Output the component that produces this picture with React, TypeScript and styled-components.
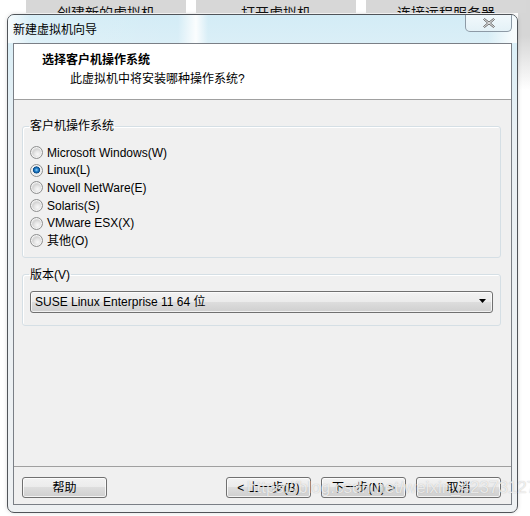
import React from "react";
import styled, { createGlobalStyle } from "styled-components";

const Global = createGlobalStyle`
  html, body { margin: 0; padding: 0; background: #fff; }
  body {
    font-family: "Liberation Sans", "Noto Sans CJK SC", sans-serif;
    font-size: 12px;
    color: #000;
  }
`;

const Page = styled.div`
  position: relative;
  width: 530px;
  height: 516px;
  overflow: hidden;
  background:
    linear-gradient(to bottom, #d6d6d6 0, #d6d6d6 36px, rgba(255,255,255,0) 90px) right top / 12px 100% no-repeat,
    #fff;
`;

const TabStrip = styled.div`
  display: flex;
  height: 14px;
  padding-left: 26px;
  gap: 10px;
`;

const Tab = styled.div<{ $w: number }>`
  width: ${(p) => p.$w}px;
  height: 13px;
  background: #d7d7d7;
  overflow: hidden;
  display: flex;
  justify-content: center;
  align-items: flex-end;
  font-size: 14px;
  line-height: 14px;
  color: #111;
  span { margin-bottom: -7px; }
`;

const Window = styled.div`
  margin-left: 7px;
  width: 511px;
  height: 499px;
  box-sizing: border-box;
  border: 1px solid #505459;
  border-radius: 7px;
  background: linear-gradient(to bottom, #d3ecf6 0, #dbeff7 30px, #e9eff3 120px, #eef1f3 100%);
  display: flex;
  flex-direction: column;
  overflow: hidden;
  box-shadow: 0 0 4px rgba(0,0,0,0.15);
`;

const TitleBar = styled.div`
  display: flex;
  height: 28px;
  padding-left: 5px;
  padding-right: 5px;
  background:
    linear-gradient(to right,
      rgba(255,255,255,0.85) 0px, rgba(255,255,255,0.1) 22px,
      rgba(255,255,255,0) 170px, rgba(255,255,255,0.9) 188px, rgba(255,255,255,0) 200px,
      rgba(255,255,255,0) 480px, rgba(255,255,255,0.8) 505px);
`;

const TitleText = styled.div`
  flex: 1;
  align-self: center;
  line-height: 14px;
  margin-top: 2px;
`;

const CloseButton = styled.div`
  width: 47px;
  height: 18px;
  margin-top: -1px;
  box-sizing: border-box;
  border: 1px solid #8d9aa6;
  border-top: none;
  border-radius: 0 0 5px 5px;
  background: linear-gradient(to bottom, #f2f9fc, #e4f1f7);
  display: flex;
  justify-content: center;
  align-items: center;
`;

const Client = styled.div`
  margin: 0 5px 0 5px;
  height: 462px;
  box-sizing: border-box;
  border: 1px solid #7a7f86;
  background: #f0f0f0;
  display: flex;
  flex-direction: column;
`;

const Header = styled.div`
  height: 56px;
  box-sizing: border-box;
  background: #fff;
  border-bottom: 1px solid #a0a0a0;
  padding: 8px 0 0 28px;
`;

const HeaderTitle = styled.div`
  font-weight: bold;
  font-size: 12px;
  line-height: 16px;
`;

const HeaderSub = styled.div`
  margin-top: 3px;
  padding-left: 28px;
  line-height: 16px;
`;

const Body = styled.div`
  flex: 1;
  padding: 19px 10px 0 8px;
  display: flex;
  flex-direction: column;
  gap: 10px;
`;

const Group = styled.fieldset<{ $pt: number; $pb: number }>`
  margin: 0;
  min-width: 0;
  border: 1px solid #d5dfe5;
  border-radius: 3px;
  padding: ${(p) => p.$pt}px 7px ${(p) => p.$pb}px 7px;
  box-shadow: inset 1px 1px 0 #fff;
`;

const Legend = styled.legend`
  padding: 0 1px;
  margin-left: -1px;
  line-height: 14px;
`;

const RadioRow = styled.label`
  display: flex;
  align-items: center;
  height: 17.6px;
  gap: 4px;
  line-height: 14px;
`;

const RadioDot = styled.span<{ $on?: boolean }>`
  width: 13px;
  height: 13px;
  box-sizing: border-box;
  border-radius: 50%;
  border: 1px solid #8e8f8f;
  background: ${(p) =>
    p.$on
      ? "radial-gradient(circle at 50% 45%, #9bd3f5 0, #2a8ad4 1.5px, #0b4f8f 3px, #0b4f8f 3.3px, #e8e8e8 3.8px, #f6f6f6 100%)"
      : "radial-gradient(circle at 60% 65%, #f8f8f8 0, #e6e6e6 3px, #d4d4d4 5px, #f4f4f4 100%)"};
  box-shadow: inset 0 0 0 1px #f4f4f4;
  flex-shrink: 0;
`;

const Select = styled.div`
  height: 22px;
  box-sizing: border-box;
  border: 1px solid #707070;
  border-radius: 3px;
  background: linear-gradient(to bottom, #f2f2f2 0, #ebebeb 50%, #dddddd 50%, #cfcfcf 100%);
  box-shadow: inset 0 0 0 1px rgba(255,255,255,0.7);
  display: flex;
  align-items: center;
  padding: 0 5px 0 4px;
  line-height: 14px;
`;

const SelectText = styled.span`
  flex: 1;
`;

const Footer = styled.div`
  height: 38px;
  box-sizing: border-box;
  border-top: 1px solid #a0a0a0;
  padding: 10px 10px 0 8px;
  display: flex;
  gap: 10px;
`;

const Button = styled.div`
  width: 85px;
  height: 21px;
  box-sizing: border-box;
  border: 1px solid #707070;
  border-radius: 3px;
  background: linear-gradient(to bottom, #f2f2f2 0, #ebebeb 50%, #dddddd 50%, #cfcfcf 100%);
  box-shadow: inset 0 0 0 1px rgba(255,255,255,0.75);
  display: flex;
  justify-content: center;
  align-items: center;
  line-height: 14px;
`;

const Spacer = styled.div`
  flex: 1;
`;

const Watermark = styled.div`
  position: absolute;
  left: 247px;
  top: 478px;
  font-family: "Liberation Sans", sans-serif;
  font-size: 17px;
  line-height: 20px;
  white-space: nowrap;
  color: rgba(255, 255, 255, 0.72);
  text-shadow: 0 0 1px rgba(120,120,120,0.5);
  pointer-events: none;
`;

const options = [
  "Microsoft Windows(W)",
  "Linux(L)",
  "Novell NetWare(E)",
  "Solaris(S)",
  "VMware ESX(X)",
  "其他(O)",
];

export default function App() {
  return (
    <Page>
      <Global />
      <TabStrip>
        <Tab $w={160}><span>创建新的虚拟机</span></Tab>
        <Tab $w={160}><span>打开虚拟机</span></Tab>
        <Tab $w={160}><span>连接远程服务器</span></Tab>
      </TabStrip>
      <Window>
        <TitleBar>
          <TitleText>新建虚拟机向导</TitleText>
          <CloseButton>
            <svg width="14" height="12" viewBox="0 0 14 12">
              <path
                d="M2.5 1.5 L7 5 L11.5 1.5 L12.5 2.5 L8.5 6 L12.5 9.5 L11.5 10.5 L7 7 L2.5 10.5 L1.5 9.5 L5.5 6 L1.5 2.5 Z"
                fill="#e8e8e8"
                stroke="#6d6d6d"
                strokeWidth="1"
                strokeLinejoin="round"
              />
            </svg>
          </CloseButton>
        </TitleBar>
        <Client>
          <Header>
            <HeaderTitle>选择客户机操作系统</HeaderTitle>
            <HeaderSub>此虚拟机中将安装哪种操作系统?</HeaderSub>
          </Header>
          <Body>
            <Group $pt={11} $pb={7}>
              <Legend>客户机操作系统</Legend>
              {options.map((o, i) => (
                <RadioRow key={o}>
                  <RadioDot $on={i === 1} />
                  <span>{o}</span>
                </RadioRow>
              ))}
            </Group>
            <Group $pt={9} $pb={12}>
              <Legend>版本(V)</Legend>
              <Select>
                <SelectText>SUSE Linux Enterprise 11 64 位</SelectText>
                <svg width="8" height="5" viewBox="0 0 8 5">
                  <path d="M0 0 H7 L3.5 4 Z" fill="#000" />
                </svg>
              </Select>
            </Group>
          </Body>
          <Footer>
            <Button>帮助</Button>
            <Spacer />
            <Button>&lt; 上一步(B)</Button>
            <Button>下一步(N) &gt;</Button>
            <Button>取消</Button>
          </Footer>
        </Client>
      </Window>
      <Watermark>https://blog.csdn.net/weixin_42373127</Watermark>
    </Page>
  );
}
